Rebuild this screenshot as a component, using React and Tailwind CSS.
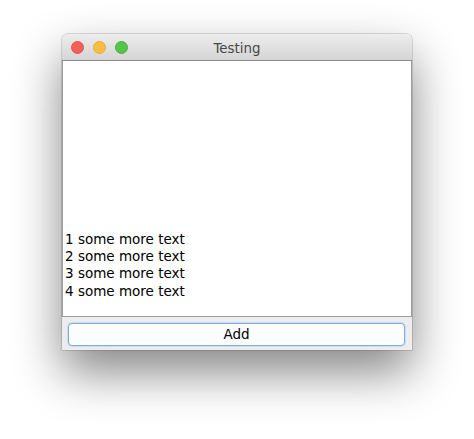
const lines = ["1 some more text", "2 some more text", "3 some more text", "4 some more text"];

const TrafficLight = ({ color, ring }) => (
  <span className={`block w-[13px] h-[13px] rounded-full border ${color} ${ring}`} />
);

const App = () => {
  return (
    <div className="w-[474px] h-[439px] bg-white pt-[34px] pl-[62px] font-['DejaVu_Sans',sans-serif]">
      <div className="w-[350px] h-[316px] flex flex-col rounded-t-[5px] bg-[#ececec] shadow-[0_22px_48px_rgba(0,0,0,0.48),0_0_0_0.5px_rgba(0,0,0,0.25)]">
        {/* title bar */}
        <div className="h-[27px] pt-[1px] grid grid-cols-[1fr_auto_1fr] items-center rounded-t-[5px] bg-gradient-to-b from-[#ededed] to-[#d5d5d5] border-b border-[#8a8a8a] px-[9px]">
          <div className="flex items-center gap-[9px]">
            <TrafficLight color="bg-[#f2605a]" ring="border-[#e6514b]" />
            <TrafficLight color="bg-[#f7be41]" ring="border-[#e9ab33]" />
            <TrafficLight color="bg-[#56c34b]" ring="border-[#48b13e]" />
          </div>
          <div className="mt-[2px] text-[13.4px] text-[#474747] leading-none">Testing</div>
          <div />
        </div>

        {/* text area */}
        <div className="flex-1 flex flex-col justify-end bg-white border-x border-b border-[#9c9c9c] pl-[2px] pb-[16px]">
          {lines.map((line) => (
            <div key={line} className="text-[13.5px] leading-[17.3px] text-black">
              {line}
            </div>
          ))}
        </div>

        {/* bottom bar */}
        <div className="h-[33px] bg-[#ededed] pt-[5px] pl-[6px] pr-[7px]">
          <button
            type="button"
            className="w-full h-[23px] rounded-[4px] border border-[#80ade6] bg-[#fcfdff] text-[13.5px] text-black leading-none shadow-[0_0_0_1px_rgba(140,180,235,0.3)]"
          >
            Add
          </button>
        </div>
      </div>
    </div>
  );
};

export default App;
